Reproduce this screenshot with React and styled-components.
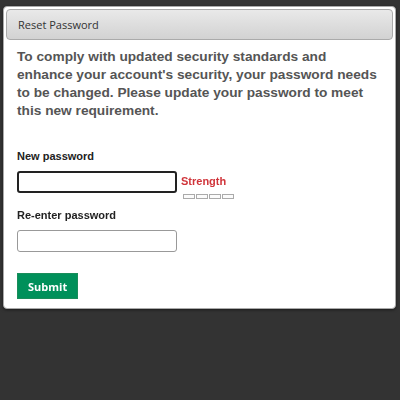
import React from 'react'
import styled, { createGlobalStyle } from 'styled-components';

const GlobalStyle = createGlobalStyle`
    html, body {
        margin: 0;
        padding: 0;
        background: #333333;
        height: 100%;
    }
`;

function App() {
    return (
        <>
            <GlobalStyle />
            <Overlay>
                <Dialog>
                    <TitleBar>
                        <Title>Reset Password</Title>
                    </TitleBar>
                    <Content>
                        <Message>
                            To comply with updated security standards and enhance your account's security, your password needs to be changed. Please update your password to meet this new requirement.
                        </Message>
                        <Field spacing={16}>
                            <Label>New password</Label>
                            <InputRow>
                                <Input type="password" focused autoFocus />
                                <Strength>
                                    <StrengthText>Strength</StrengthText>
                                    <Meter>
                                        <MeterBox />
                                        <MeterBox />
                                        <MeterBox />
                                        <MeterBox />
                                    </Meter>
                                </Strength>
                            </InputRow>
                        </Field>
                        <Field spacing={21}>
                            <Label>Re-enter password</Label>
                            <Input type="password" />
                        </Field>
                        <SubmitButton>Submit</SubmitButton>
                    </Content>
                </Dialog>
            </Overlay>
        </>
    )
}

const Overlay = styled.div`
    padding: 6px 4px 0 3px;
`;

const Dialog = styled.div`
    width: 393px;
    box-sizing: border-box;
    background: #fff;
    border: 1px solid #aaa;
    border-radius: 4px;
    padding: 2px;
    box-shadow: 0 1px 3px rgba(0, 0, 0, 0.5);
`;

const TitleBar = styled.div`
    height: 31px;
    box-sizing: border-box;
    display: flex;
    align-items: center;
    padding: 0 11px;
    border: 1px solid #aaa;
    border-radius: 4px;
    background: linear-gradient(#e9e9e9, #d2d2d2);
`;

const Title = styled.span`
    font-family: "Open Sans", sans-serif;
    font-size: 11px;
    color: #333;
`;

const Content = styled.div`
    padding: 8px 8px 7px 11px;
`;

const Message = styled.p`
    margin: 0 0 30px 0;
    font-family: "Liberation Sans", Arial, sans-serif;
    font-weight: bold;
    font-size: 13.7px;
    line-height: 18px;
    color: #555;
`;

const Field = styled.div`
    margin-bottom: ${({ spacing }) => spacing}px;
`;

const Label = styled.div`
    font-family: "Liberation Sans", Arial, sans-serif;
    font-weight: bold;
    font-size: 11px;
    line-height: 13px;
    color: #222;
    margin-bottom: 8px;
`;

const InputRow = styled.div`
    display: flex;
    align-items: flex-start;
    gap: 4px;
    height: 22px;
`;

const Input = styled.input`
    display: block;
    width: 160px;
    height: 22px;
    box-sizing: border-box;
    margin: 0;
    padding: 2px 4px;
    border: ${({ focused }) => (focused ? '2px solid #222' : '1px solid #999')};
    border-radius: 3px;
    outline: none;
    background: #fff;
    font-size: 12px;
`;

const Strength = styled.div`
    display: flex;
    flex-direction: column;
    padding-top: 4px;
`;

const StrengthText = styled.span`
    font-family: "Liberation Sans", Arial, sans-serif;
    font-weight: bold;
    font-size: 11px;
    line-height: 13px;
    color: #d0343a;
`;

const Meter = styled.div`
    display: flex;
    gap: 1px;
    margin: 6px 0 0 2px;
`;

const MeterBox = styled.span`
    width: 12px;
    height: 5px;
    box-sizing: border-box;
    border: 1px solid #aaa;
    background: #fbfbfb;
`;

const SubmitButton = styled.button`
    display: block;
    height: 26px;
    padding: 0 10px;
    border: 1px solid #1a8d5a;
    background: #00905a;
    color: #fff;
    font-family: "Open Sans", sans-serif;
    font-weight: bold;
    font-size: 11px;
    cursor: pointer;
`;

export default App
